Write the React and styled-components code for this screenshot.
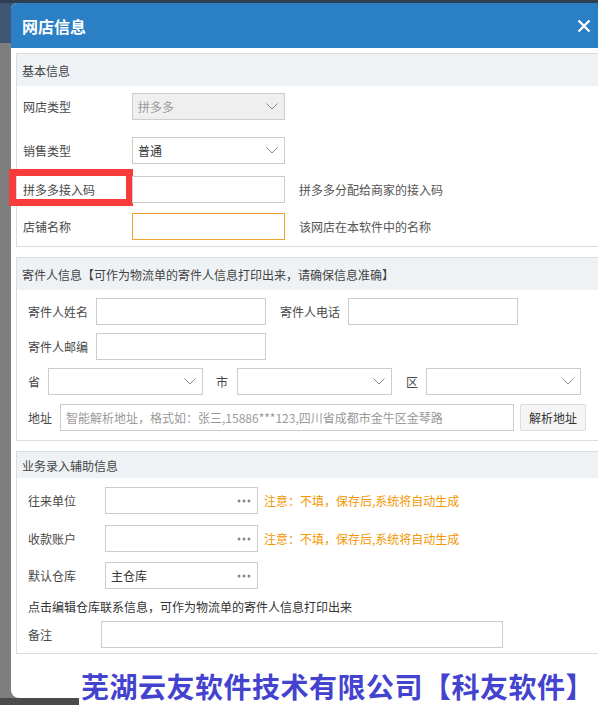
import React from 'react';
import styled, { createGlobalStyle } from 'styled-components';

const GlobalStyle = createGlobalStyle`
  html, body {
    margin: 0;
    padding: 0;
    overflow: hidden;
  }
  body {
    font-family: "Noto Sans CJK SC", "Microsoft YaHei", sans-serif;
    font-size: 12px;
    color: #444;
  }
  * {
    box-sizing: border-box;
  }
`;

const Backdrop = styled.div`
  position: relative;
  width: 598px;
  height: 705px;
  overflow: hidden;
  padding: 3px 0 0 11px;
  background: linear-gradient(to bottom, #2f3f50 0, #2f3f50 3px, #3d5673 3px, #3d5673 43px, #7e7e7e 43px, #7e7e7e 698px, #4b4b4b 698px);
`;

const Modal = styled.div`
  width: 620px;
  height: 695px;
  background: #ffffff;
  border-radius: 6px 6px 8px 8px;
  display: flex;
  flex-direction: column;
`;

const Header = styled.div`
  height: 45px;
  background: #2a7fc5;
  border-radius: 6px 6px 0 0;
  display: flex;
  align-items: center;
  justify-content: space-between;
  padding-left: 11px;
`;

const Title = styled.div`
  color: #ffffff;
  font-size: 16px;
  font-weight: bold;
`;

const Close = styled.div`
  width: 14px;
  height: 14px;
  margin-right: 40px;
  display: flex;
`;

const Body = styled.div`
  padding: 5px;
`;

const Section = styled.div`
  border: 1px solid #dcdcdc;
  margin-bottom: 10px;
  padding-bottom: ${p => p.$pb}px;
`;

const SectionHead = styled.div`
  height: ${p => p.$h}px;
  background: #eef2f5;
  display: flex;
  align-items: center;
  padding-left: 5px;
  color: #444;
  font-size: 12px;
`;

const Row = styled.div`
  position: relative;
  display: flex;
  align-items: center;
  margin-top: ${p => p.$mt}px;
  padding-left: ${p => p.$pl}px;
  min-height: 27px;
`;

const Label = styled.div`
  width: ${p => p.$w}px;
  flex-shrink: 0;
  margin-left: ${p => p.$ml || 0}px;
  color: #484848;
  white-space: nowrap;
`;

const Field = styled.div`
  position: relative;
  width: ${p => p.$w}px;
  height: 27px;
  flex-shrink: 0;
  display: flex;
  align-items: center;
  justify-content: space-between;
  padding: 0 6px 0 5px;
  border: 1px solid ${p => (p.$focus ? '#f0a22e' : '#cccccc')};
  background: ${p => (p.$disabled ? '#efefef' : '#ffffff')};
  color: ${p => (p.$disabled ? '#999' : p.$placeholder ? '#999' : '#333')};
  white-space: nowrap;
  overflow: hidden;
`;

const Hint = styled.div`
  margin-left: ${p => p.$ml}px;
  color: ${p => (p.$warn ? '#f39700' : '#555')};
  white-space: nowrap;
`;

const Button = styled.div`
  margin-left: 6px;
  width: 66px;
  height: 27px;
  display: flex;
  align-items: center;
  justify-content: center;
  background: #f5f5f5;
  border: 1px solid #dddddd;
  border-radius: 2px;
  color: #333;
`;

const Note = styled.div`
  margin-top: 9px;
  padding-left: 11px;
  color: #333;
  line-height: 17px;
`;

const Marker = styled.div`
  position: absolute;
  left: -8px;
  top: -7px;
  width: 124px;
  height: 37px;
  border: 7px solid #f83b3b;
  pointer-events: none;
`;

const Watermark = styled.div`
  position: absolute;
  left: 79px;
  right: 0;
  bottom: 0;
  height: 37px;
  background: #ffffff;
  padding-left: 2px;
  color: #4343cf;
  font-size: 28px;
  font-weight: bold;
  letter-spacing: 0.5px;
  line-height: 36px;
  white-space: nowrap;
`;

const Chevron = () => (
  <svg width="12" height="7" viewBox="0 0 12 7">
    <polyline points="0.5,0.5 6,6 11.5,0.5" fill="none" stroke="#8a8a8a" strokeWidth="1" />
  </svg>
);

const Dots = () => (
  <svg width="14" height="4" viewBox="0 0 14 4">
    <circle cx="2" cy="2" r="1.5" fill="#888" />
    <circle cx="7" cy="2" r="1.5" fill="#888" />
    <circle cx="12" cy="2" r="1.5" fill="#888" />
  </svg>
);

const Select = ({ w, value, disabled }) => (
  <Field $w={w} $disabled={disabled}>
    <span>{value}</span>
    <Chevron />
  </Field>
);

const Picker = ({ value }) => (
  <Field $w={153}>
    <span>{value}</span>
    <Dots />
  </Field>
);

export default function App() {
  return (
    <Backdrop>
      <GlobalStyle />
      <Modal>
        <Header>
          <Title>网店信息</Title>
          <Close>
            <svg width="14" height="14" viewBox="0 0 14 14">
              <path d="M1.5 1.5 L12.5 12.5 M12.5 1.5 L1.5 12.5" stroke="#fff" strokeWidth="2.4" />
            </svg>
          </Close>
        </Header>
        <Body>
          <Section $pb={6}>
            <SectionHead $h={32}>基本信息</SectionHead>
            <Row $mt={7} $pl={6}>
              <Label $w={109}>网店类型</Label>
              <Select w={153} value="拼多多" disabled />
            </Row>
            <Row $mt={17} $pl={6}>
              <Label $w={109}>销售类型</Label>
              <Select w={153} value="普通" />
            </Row>
            <Row $mt={12} $pl={6}>
              <Marker />
              <Label $w={109}>拼多多接入码</Label>
              <Field $w={153} />
              <Hint $ml={14}>拼多多分配给商家的接入码</Hint>
            </Row>
            <Row $mt={10} $pl={6}>
              <Label $w={109}>店铺名称</Label>
              <Field $w={153} $focus />
              <Hint $ml={14}>该网店在本软件中的名称</Hint>
            </Row>
          </Section>

          <Section $pb={9}>
            <SectionHead $h={32}>寄件人信息【可作为物流单的寄件人信息打印出来，请确保信息准确】</SectionHead>
            <Row $mt={8} $pl={11}>
              <Label $w={68}>寄件人姓名</Label>
              <Field $w={170} />
              <Label $w={68} $ml={14}>寄件人电话</Label>
              <Field $w={170} />
            </Row>
            <Row $mt={8} $pl={11}>
              <Label $w={68}>寄件人邮编</Label>
              <Field $w={170} />
            </Row>
            <Row $mt={8} $pl={11}>
              <Label $w={20}>省</Label>
              <Select w={155} />
              <Label $w={21} $ml={13}>市</Label>
              <Select w={155} />
              <Label $w={20} $ml={14}>区</Label>
              <Select w={155} />
            </Row>
            <Row $mt={9} $pl={11}>
              <Label $w={32}>地址</Label>
              <Field $w={454} $placeholder>智能解析地址，格式如：张三,15886***123,四川省成都市金牛区金琴路</Field>
              <Button>解析地址</Button>
            </Row>
          </Section>

          <Section $pb={5}>
            <SectionHead $h={26}>业务录入辅助信息</SectionHead>
            <Row $mt={9} $pl={11}>
              <Label $w={77}>往来单位</Label>
              <Picker />
              <Hint $ml={6} $warn>注意：不填，保存后,系统将自动生成</Hint>
            </Row>
            <Row $mt={11} $pl={11}>
              <Label $w={77}>收款账户</Label>
              <Picker />
              <Hint $ml={6} $warn>注意：不填，保存后,系统将自动生成</Hint>
            </Row>
            <Row $mt={10} $pl={11}>
              <Label $w={77}>默认仓库</Label>
              <Picker value="主仓库" />
            </Row>
            <Note>点击编辑仓库联系信息，可作为物流单的寄件人信息打印出来</Note>
            <Row $mt={6} $pl={11}>
              <Label $w={73}>备注</Label>
              <Field $w={402} />
            </Row>
          </Section>
        </Body>
      </Modal>
      <Watermark>芜湖云友软件技术有限公司【科友软件】</Watermark>
    </Backdrop>
  );
}
